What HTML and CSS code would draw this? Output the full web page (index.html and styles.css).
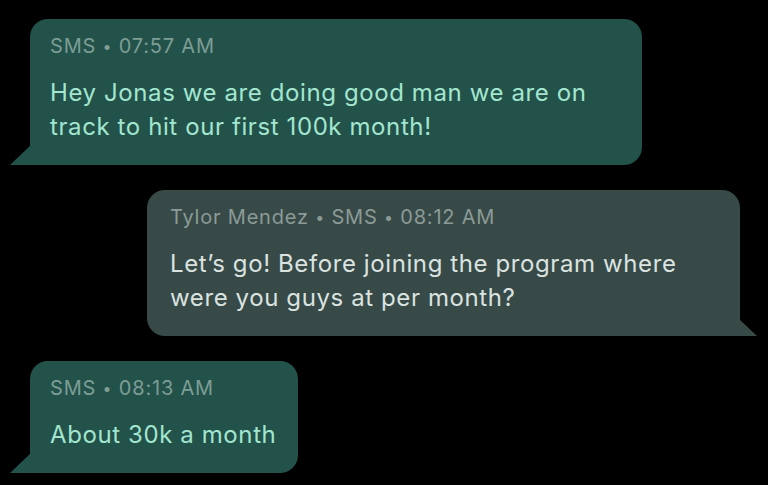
FILE: index.html
```html
<!DOCTYPE html>
<html lang="en">
<head>
    <meta charset="UTF-8">
    <meta name="viewport" content="width=device-width, initial-scale=1.0">
    <title>SMS Thread</title>
    <link rel="stylesheet" href="styles.css">
</head>
<body>
    <div class="thread">
        <div class="bubble bubble-in bubble-wide">
            <div class="meta">SMS <span class="dot">•</span> 07:57 AM</div>
            <p class="text">Hey Jonas we are doing good man we are on track to hit our first 100k month!</p>
        </div>

        <div class="bubble bubble-out">
            <div class="meta">Tylor Mendez <span class="dot">•</span> SMS <span class="dot">•</span> 08:12 AM</div>
            <p class="text">Let’s go! Before joining the program where were you guys at per month?</p>
        </div>

        <div class="bubble bubble-in">
            <div class="meta">SMS <span class="dot">•</span> 08:13 AM</div>
            <p class="text">About 30k a month</p>
        </div>
    </div>
</body>
</html>
```

FILE: styles.css
```css
* {
    margin: 0;
    padding: 0;
    box-sizing: border-box;
    font-family: 'Inter', 'Roboto', 'Liberation Sans', sans-serif;
}

body {
    background: #000;
    width: 768px;
    height: 485px;
    overflow: hidden;
}

.thread {
    display: flex;
    flex-direction: column;
    align-items: flex-start;
    gap: 25px;
    padding: 19px 28px 0 30px;
}

.bubble {
    position: relative;
    padding: 15px 22px 21px 20px;
    border-radius: 18px;
}

.meta {
    font-size: 20px;
    line-height: 24px;
    letter-spacing: 0.8px;
    margin-bottom: 18px;
}

.meta .dot {
    font-size: 16px;
    vertical-align: 1px;
}

.text {
    font-size: 24px;
    line-height: 34px;
    letter-spacing: 0.6px;
}

/* входящие */
.bubble-in {
    background: #23524a;
    border-bottom-left-radius: 0;
}

.bubble-in .meta {
    color: #7d9d95;
}

.bubble-in .text {
    color: #a3e6d0;
}

.bubble-in::before {
    content: '';
    position: absolute;
    left: -20px;
    bottom: 0;
    width: 21px;
    height: 20px;
    background: #23524a;
    clip-path: polygon(100% 0, 100% 100%, 0 100%);
}

.bubble-wide {
    width: 612px;
}

/* исходящие */
.bubble-out {
    align-self: flex-end;
    width: 593px;
    background: #374a47;
    border-bottom-right-radius: 0;
    padding-left: 23px;
}

.bubble-out .meta {
    color: #8c9a97;
}

.bubble-out .text {
    color: #dbe3e0;
}

.bubble-out::after {
    content: '';
    position: absolute;
    right: -17px;
    bottom: 0;
    width: 18px;
    height: 17px;
    background: #374a47;
    clip-path: polygon(0 0, 100% 100%, 0 100%);
}
```
